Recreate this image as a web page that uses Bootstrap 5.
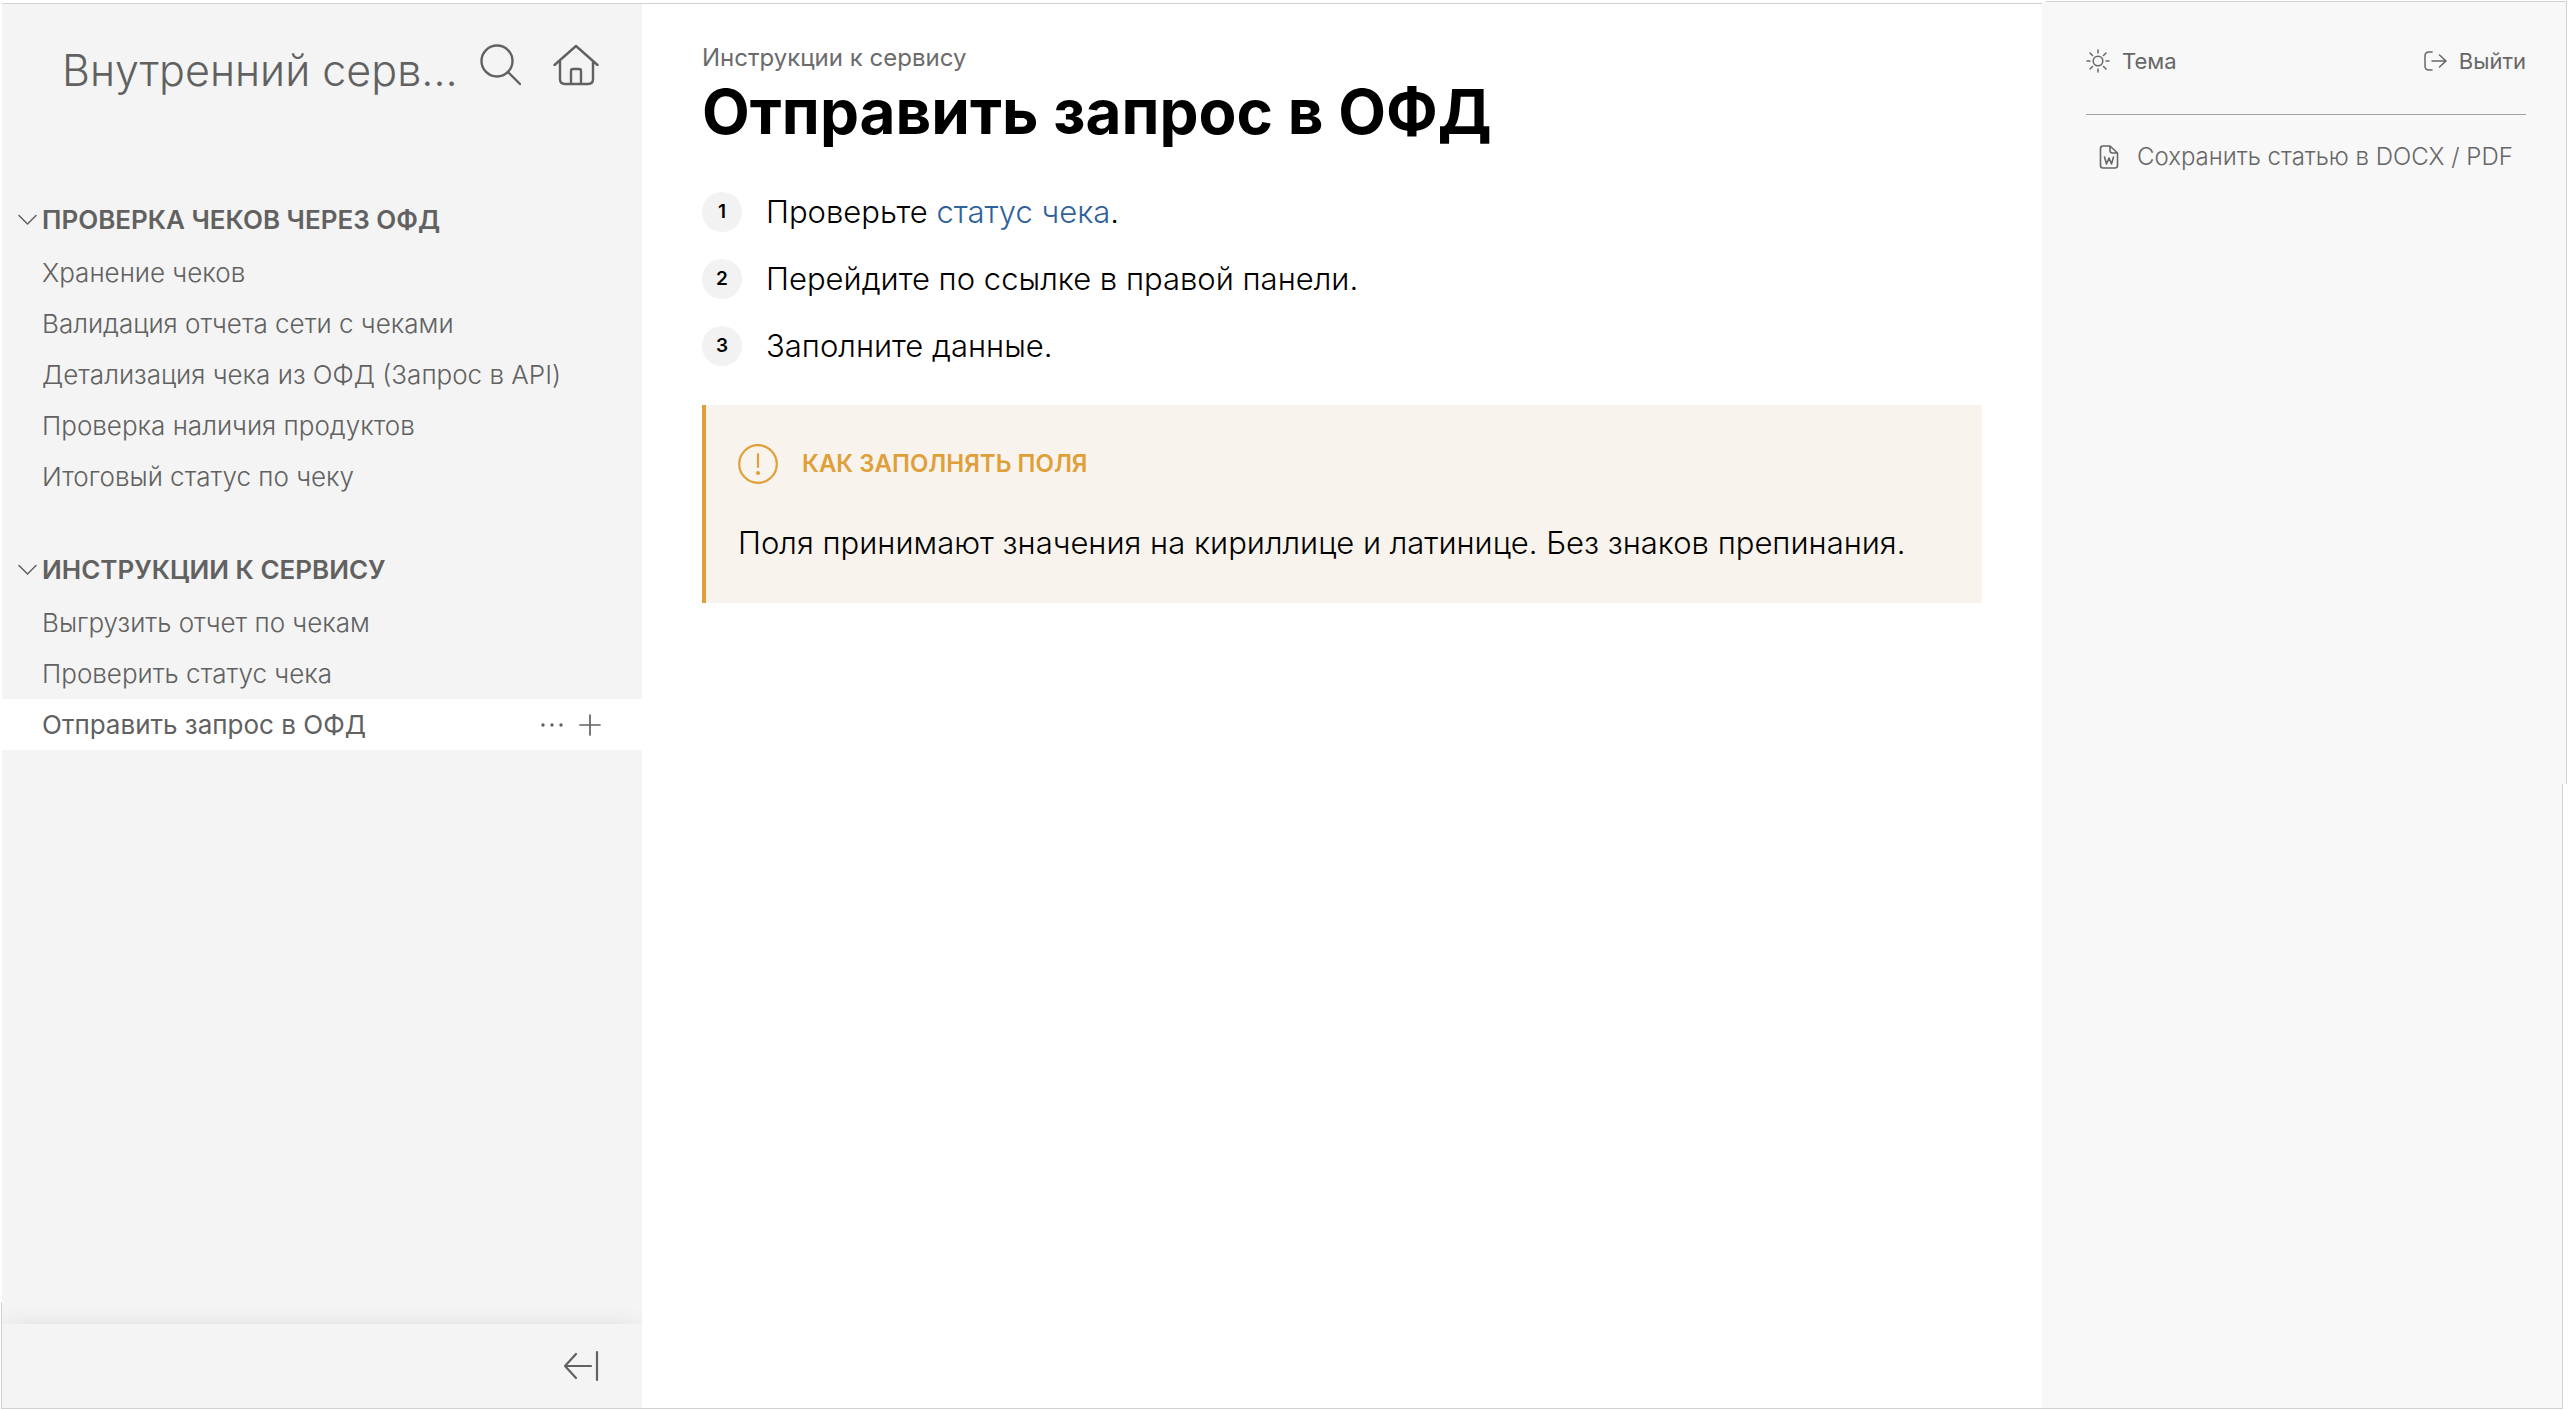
<!DOCTYPE html>
<html lang="ru">
<head>
<meta charset="utf-8">
<meta name="viewport" content="width=device-width, initial-scale=1">
<title>Отправить запрос в ОФД</title>
<link href="https://cdn.jsdelivr.net/npm/bootstrap@5.3.0/dist/css/bootstrap.min.css" rel="stylesheet">
<style>
  body { font-family: Inter, "Noto Sans", sans-serif; color: #000; background: #fff; }
  svg { display: block; flex: none; fill: none; stroke: currentColor; stroke-linecap: round; stroke-linejoin: round; }
  .page-shell { padding: 4px 8px 2px 2px; }
  .sidebar { width: 640px; background: #f4f4f4; color: #616161; }
  .sidebar-head { height: 128px; padding: 36px 43px 0 60px; }
  .sidebar-icons { gap: 32px; }
  .site-name { font-size: 43px; line-height: 60px; font-weight: 300; }
  .icon-btn { border: 0; padding: 0; background: none; color: inherit; }
  .nav-block { padding-top: 60px; }
  .nav-block + .nav-block { padding-top: 40px; }
  .nav-title { height: 55px; padding-left: 16px; gap: 5px; font-size: 26px; font-weight: 600; text-transform: uppercase; }
  .nav-item-row { height: 51px; padding: 0 41px 0 40px; font-size: 26px; font-weight: 300; }
  .nav-item-row.current { background: #fff; font-weight: 400; }
  .sidebar-foot { height: 84px; padding: 0 43px; background: #f4f4f4; box-shadow: 0 0 24px -4px rgba(0,0,0,.12); clip-path: inset(-40px 0 0 0); }
  .article { padding: 36px 60px 0; }
  .crumb { font-size: 24px; line-height: 36px; color: #6b6b6b; }
  .article h1 { font-size: 62px; line-height: 72px; font-weight: 700; margin: 0; }
  .steps { margin-top: 40px; gap: 20px; font-size: 31px; font-weight: 300; }
  .steps li { gap: 24px; line-height: 47px; }
  .step-num { width: 40px; height: 40px; background: #f2f2f2; font-size: 19px; font-weight: 600; line-height: 40px; }
  .text-link { color: #2f629b; }
  .note { margin-top: 36px; padding: 36px 32px; border-left: 4px solid #e09f39; background: #f8f4ed; }
  .note-title { gap: 24px; font-size: 24px; font-weight: 600; line-height: 46px; color: #e09f39; }
  .note-text { margin: 32px 0 0; font-size: 31px; line-height: 48px; font-weight: 300; }
  .tools { width: 520px; background: #f8f8f8; color: #666; padding: 0 36px 0 44px; }
  .tools-top { height: 111px; padding-top: 4px; border-bottom: 1px solid #a3a3a3; font-size: 22px; }
  .tools-top .icon-btn { gap: 12px; }
  .save-btn { gap: 18px; padding: 24px 13px; font-size: 24px; line-height: 36px; font-weight: 300; }
  .edge { position: absolute; background: #d1d1d1; }
  .edge-top { top: 3px; left: 2px; right: 524px; height: 1px; }
  .edge-top-right { top: 1px; right: 3px; width: 521px; height: 1px; }
  .edge-top-fill { top: 2px; right: 4px; width: 524px; height: 2px; background: #f8f8f8; }
  .edge-right { top: 1px; right: 3px; width: 1px; height: 783px; }
  .edge-right-fill { top: 2px; right: 4px; width: 4px; height: 782px; background: #f8f8f8; }
  .edge-right-low { top: 784px; right: 7px; bottom: 1px; width: 1px; }
  .edge-left { left: 1px; bottom: 1px; width: 1px; height: 107px; }
  .edge-bottom { left: 1px; right: 7px; bottom: 1px; height: 1px; }
</style>
</head>
<body>
<div class="page-shell d-flex min-vh-100 position-relative">
  <aside class="sidebar d-flex flex-column flex-shrink-0">
    <header class="sidebar-head d-flex align-items-start">
      <div class="site-name text-nowrap flex-grow-1">Внутренний серв…</div>
      <div class="sidebar-icons d-flex">
        <button class="icon-btn" type="button" aria-label="Поиск"><svg width="42" height="54" viewBox="0 0 42 54" stroke-width="2.4"><circle cx="18" cy="21" r="15.500"/><path d="M29 32l12 12"/></svg></button>
        <button class="icon-btn" type="button" aria-label="Главная"><svg width="46" height="54" viewBox="0 0 46 54" stroke-width="2.4"><path d="M1.500 25 23 6 44.500 25M7 21V39q0 5 5 5H35q5 0 5-5V21M18 44V31q0-2 2-2h6q2 0 2 2V44"/></svg></button>
      </div>
    </header>
    <nav class="flex-grow-1">
      <section class="nav-block">
        <h2 class="nav-title d-flex align-items-center m-0"><svg width="19" height="12" viewBox="0 0 19 12" stroke-width="1.500"><path d="M1 1.500l8.500 8.500L18 1.500"/></svg>Проверка чеков через ОФД</h2>
        <a class="nav-item-row d-flex align-items-center text-reset text-decoration-none" href="#">Хранение чеков</a>
        <a class="nav-item-row d-flex align-items-center text-reset text-decoration-none" href="#">Валидация отчета сети с чеками</a>
        <a class="nav-item-row d-flex align-items-center text-reset text-decoration-none" href="#">Детализация чека из ОФД (Запрос в API)</a>
        <a class="nav-item-row d-flex align-items-center text-reset text-decoration-none" href="#">Проверка наличия продуктов</a>
        <a class="nav-item-row d-flex align-items-center text-reset text-decoration-none" href="#">Итоговый статус по чеку</a>
      </section>
      <section class="nav-block">
        <h2 class="nav-title d-flex align-items-center m-0"><svg width="19" height="12" viewBox="0 0 19 12" stroke-width="1.500"><path d="M1 1.500l8.500 8.500L18 1.500"/></svg>Инструкции к сервису</h2>
        <a class="nav-item-row d-flex align-items-center text-reset text-decoration-none" href="#">Выгрузить отчет по чекам</a>
        <a class="nav-item-row d-flex align-items-center text-reset text-decoration-none" href="#">Проверить статус чека</a>
        <div class="nav-item-row current d-flex align-items-center">
          <a class="flex-grow-1 text-reset text-decoration-none" href="#" aria-current="page">Отправить запрос в ОФД</a>
          <button class="icon-btn me-3" type="button" aria-label="Действия"><svg width="22" height="4" viewBox="0 0 22 4"><g fill="#616161" stroke="none"><circle cx="2" cy="2" r="1.700"/><circle cx="11" cy="2" r="1.700"/><circle cx="20" cy="2" r="1.700"/></g></svg></button>
          <button class="icon-btn" type="button" aria-label="Добавить"><svg width="22" height="22" viewBox="0 0 22 22" stroke-width="1.700"><path d="M11 1v20M1 11h20"/></svg></button>
        </div>
      </section>
    </nav>
    <footer class="sidebar-foot d-flex align-items-center justify-content-end">
      <button class="icon-btn" type="button" aria-label="Свернуть"><svg width="36" height="32" viewBox="0 0 36 32" stroke-width="2.200"><path d="M28 16H2M13 4L2 16l11 12M34 2v28"/></svg></button>
    </footer>
  </aside>

  <main class="article flex-grow-1">
    <div class="crumb">Инструкции к сервису</div>
    <h1>Отправить запрос в ОФД</h1>
    <ol class="steps list-unstyled d-flex flex-column mb-0">
      <li class="d-flex align-items-center"><span class="step-num rounded-circle text-center">1</span><span>Проверьте <a class="text-link text-decoration-none" href="#">статус чека</a>.</span></li>
      <li class="d-flex align-items-center"><span class="step-num rounded-circle text-center">2</span><span>Перейдите по ссылке в правой панели.</span></li>
      <li class="d-flex align-items-center"><span class="step-num rounded-circle text-center">3</span><span>Заполните данные.</span></li>
    </ol>
    <section class="note">
      <div class="note-title d-flex align-items-center"><svg width="40" height="40" viewBox="0 0 40 40" stroke-width="2.200"><circle cx="20" cy="20" r="18.800"/><path d="M20 10v13"/><circle cx="20" cy="29" r="1" fill="#e09f39"/></svg>КАК ЗАПОЛНЯТЬ ПОЛЯ</div>
      <p class="note-text">Поля принимают значения на кириллице и латинице. Без знаков препинания.</p>
    </section>
  </main>

  <aside class="tools flex-shrink-0">
    <div class="tools-top d-flex align-items-center justify-content-between">
      <button class="icon-btn d-flex align-items-center" type="button"><svg width="24" height="24" viewBox="0 0 24 24" stroke-width="1.500"><circle cx="12" cy="12" r="4.800"/><path d="M12 1v3M12 20v3M1 12h3M20 12h3M4 4l2.500 2.500M17.500 17.500L20 20M4 20l2.500-2.500M17.500 6.500L20 4"/></svg>Тема</button>
      <button class="icon-btn d-flex align-items-center" type="button"><svg width="24" height="22" viewBox="0 0 24 22" stroke-width="1.500"><path d="M9 2H6Q2 2 2 6V16Q2 20 6 20H9M9 11H23M16.500 5l6.500 6-6.500 6"/></svg>Выйти</button>
    </div>
    <button class="icon-btn save-btn d-flex align-items-center text-nowrap" type="button"><svg width="20" height="26" viewBox="0 0 20 26" stroke-width="1.600"><path d="M11 2H4Q1.500 2 1.500 4.500V21.500Q1.500 24 4 24H16Q18.500 24 18.500 21.500V9ZM11 2V6.500Q11 9 13.500 9H18.500M5.500 13L7.500 20 10 14 12.500 20 14.500 13"/></svg>Сохранить статью в DOCX / PDF</button>
  </aside>

  <div class="edge edge-top"></div><div class="edge edge-top-right"></div>
  <div class="edge edge-top-fill"></div><div class="edge edge-right-fill"></div>
  <div class="edge edge-right"></div><div class="edge edge-right-low"></div>
  <div class="edge edge-left"></div><div class="edge edge-bottom"></div>
</div>
<script src="https://cdn.jsdelivr.net/npm/bootstrap@5.3.0/dist/js/bootstrap.bundle.min.js"></script>
</body>
</html>
